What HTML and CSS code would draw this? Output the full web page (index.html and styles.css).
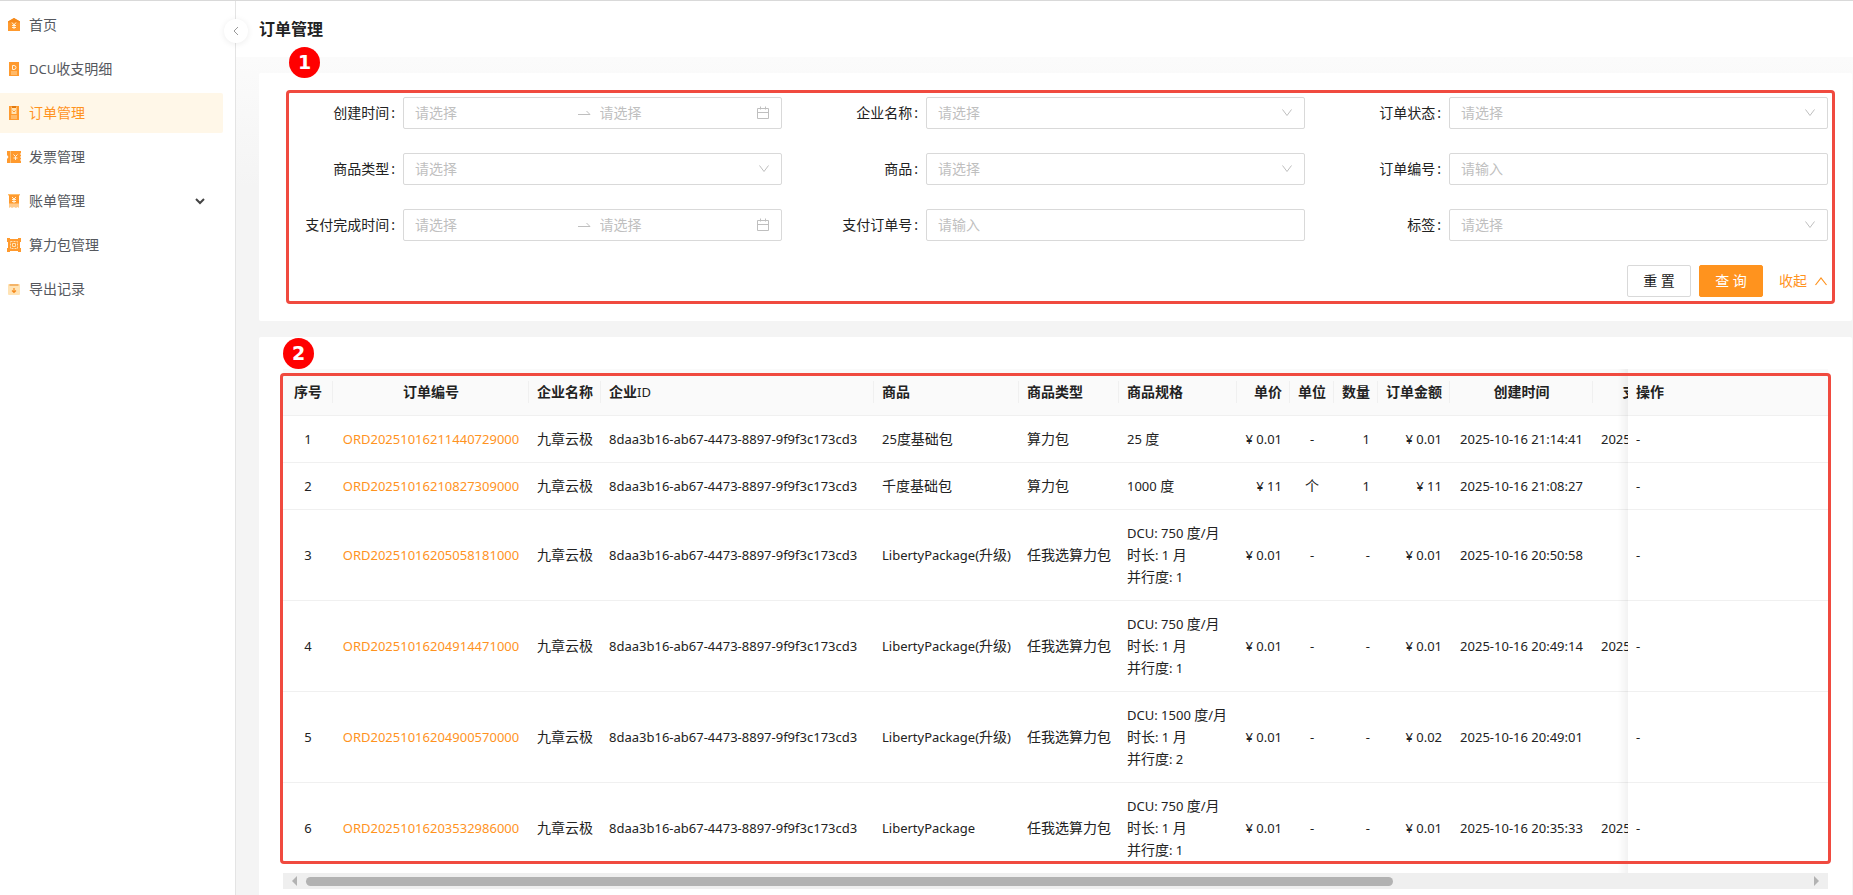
FILE: index.html
```html
<!DOCTYPE html>
<html lang="zh-CN">
<head>
  <meta charset="UTF-8">
  <meta name="viewport" content="width=device-width, initial-scale=1.0">
  <title>订单管理</title>
  <link rel="stylesheet" href="styles.css">
</head>
<body>
  <svg class="defs" aria-hidden="true">
    <symbol id="down" viewBox="0 0 12 12"><path d="M1.5 2.5 6 8.5l4.5-6" fill="none" stroke="currentColor"/></symbol>
    <symbol id="arrow" viewBox="0 0 16 16"><path d="M2 9.500h12L10.500 6" fill="none" stroke="currentColor"/></symbol>
    <symbol id="calendar" viewBox="0 0 14 14"><path d="M1.500 2.500h11v10h-11zM1.500 6.500h11M4.500 .5v3M9.500 .5v3" fill="none" stroke="currentColor"/></symbol>
  </svg>

  <aside class="sidebar">
    <nav class="menu">
      <a href="#">
        <svg viewBox="0 0 14 14"><path d="M7 0 13 3.500V13H1V3.500z" fill="#ff9a2e"/><path d="M1 3.500 7 0l6 3.500V4.500H1z" fill="#f58a1c"/><path d="M5 4.500l2 2.500L9 4.500M7 7v4M5 7.500h4M5 9.500h4" fill="none" stroke="#fff2dc"/></svg>
        <span>首页</span>
      </a>
      <a href="#">
        <svg viewBox="0 0 14 14"><path d="M2 0h10v14H2z" fill="#ff9a2e"/><path d="M5.500 3.500H7q2 0 2 2t-2 2H5.500z" fill="none" stroke="#fff2dc"/><path d="M4 10h6M4 12h6" stroke="#ffd9a3"/></svg>
        <span><span class="en">DCU</span>收支明细</span>
      </a>
      <a href="#" class="active">
        <svg viewBox="0 0 14 14"><path d="M2 0h10v14H2z" fill="#ff9a2e"/><path d="M4.500 1h5v7h-5z" fill="#ffe3b5"/><path d="M5 0h4v2H5z" fill="#e07a10"/><path d="M5.500 4.500 7 6l1.500-1.500" fill="none" stroke="#ff9a2e"/><path d="M4 10h6M4 12h6" stroke="#ffd9a3"/></svg>
        <span>订单管理</span>
      </a>
      <a href="#">
        <svg viewBox="0 0 14 14"><path d="M0 1h14v2l-1 1 1 1v1l-1 1 1 1v1l-1 1 1 1v2H0v-4l1.500-2L0 5z" fill="#ff9a2e"/><path d="M3.500 1v12" stroke="#f9c27a"/><path d="M6.500 4.500l2 2 2-2M8.500 6.500V10M6.500 8h4" fill="none" stroke="#fff2dc"/></svg>
        <span>发票管理</span>
      </a>
      <a href="#">
        <svg viewBox="0 0 14 14"><path d="M1 0h12v1.500H1z" fill="#ffbe6b"/><path d="M2 1h10v9H2z" fill="#ff9a2e"/><path d="M2 9.500h10V14l-1.500-1L9 14l-2-1-2 1-1.500-1L2 14z" fill="#ffc98a"/><path d="M5 3l2 2 2-2M7 5v4M5 5.500h4M5 7.500h4" fill="none" stroke="#fff2dc"/></svg>
        <span>账单管理</span>
        <svg class="caret" viewBox="0 0 12 12"><path d="M2 4l4 4 4-4" fill="none" stroke="currentColor" stroke-width="2"/></svg>
      </a>
      <a href="#">
        <svg viewBox="0 0 14 14"><path d="M0 0h3v1h8V0h3v4h-1v6h1v4h-3v-1H3v1H0v-4h1V4H0z" fill="#ff9a2e"/><path d="M3.500 3.500h7v7h-7z" fill="none" stroke="#ffe0b0" stroke-dasharray="2 1"/><path d="M5.500 5.500h3v3h-3z" fill="none" stroke="#ffe0b0"/></svg>
        <span>算力包管理</span>
      </a>
      <a href="#">
        <svg viewBox="0 0 14 14"><rect x="1" y="2" width="12" height="11" rx="1" fill="#ffe3b5"/><path d="M2.500 3h9" stroke="#e8851c"/><path d="M7 6v4.500M5 8.500l2 2 2-2" fill="none" stroke="#f58a1c" stroke-width="1.200"/></svg>
        <span>导出记录</span>
      </a>
    </nav>
    <button class="collapse" type="button" aria-label="收起菜单">
      <svg viewBox="0 0 12 12"><path d="M8 2 4 6l4 4" fill="none" stroke="currentColor"/></svg>
    </button>
  </aside>

  <main class="main">
    <header class="header">
      <h1>订单管理</h1>
    </header>

    <div class="content">
      <section class="card">
        <form class="filters">
          <div class="field">
            <label for="created">创建时间<i>:</i></label>
            <div class="control range">
              <input id="created" type="text" placeholder="请选择">
              <svg class="sep"><use href="#arrow"/></svg>
              <input type="text" placeholder="请选择" aria-label="创建时间止">
              <svg class="cal"><use href="#calendar"/></svg>
            </div>
          </div>
          <div class="field">
            <label for="company">企业名称<i>:</i></label>
            <div class="control"><select id="company"><option>请选择</option></select><svg class="down"><use href="#down"/></svg></div>
          </div>
          <div class="field">
            <label for="status">订单状态<i>:</i></label>
            <div class="control"><select id="status"><option>请选择</option></select><svg class="down"><use href="#down"/></svg></div>
          </div>
          <div class="field">
            <label for="type">商品类型<i>:</i></label>
            <div class="control"><select id="type"><option>请选择</option></select><svg class="down"><use href="#down"/></svg></div>
          </div>
          <div class="field">
            <label for="goods">商品<i>:</i></label>
            <div class="control"><select id="goods"><option>请选择</option></select><svg class="down"><use href="#down"/></svg></div>
          </div>
          <div class="field">
            <label for="order">订单编号<i>:</i></label>
            <div class="control"><input id="order" type="text" placeholder="请输入"></div>
          </div>
          <div class="field">
            <label for="paid">支付完成时间<i>:</i></label>
            <div class="control range">
              <input id="paid" type="text" placeholder="请选择">
              <svg class="sep"><use href="#arrow"/></svg>
              <input type="text" placeholder="请选择" aria-label="支付完成时间止">
              <svg class="cal"><use href="#calendar"/></svg>
            </div>
          </div>
          <div class="field">
            <label for="payno">支付订单号<i>:</i></label>
            <div class="control"><input id="payno" type="text" placeholder="请输入"></div>
          </div>
          <div class="field">
            <label for="tag">标签<i>:</i></label>
            <div class="control"><select id="tag"><option>请选择</option></select><svg class="down"><use href="#down"/></svg></div>
          </div>
          <div class="actions">
            <button class="btn" type="reset">重 置</button>
            <button class="btn primary" type="button">查 询</button>
            <a class="fold" href="#">收起 <svg viewBox="0 0 14 14"><path d="M1.500 11 7 4l5.500 7" fill="none" stroke="currentColor" stroke-width="1.200"/></svg></a>
          </div>
        </form>
        <div class="frame frame-filters"></div>
        <span class="badge badge-one">1</span>
      </section>

      <section class="card card-table">
        <div class="table-box">
          <div class="scroller">
            <table>
              <colgroup>
                <col class="w-index"><col class="w-order"><col class="w-company"><col class="w-id"><col class="w-goods"><col class="w-type"><col class="w-spec"><col class="w-price"><col class="w-unit"><col class="w-unit"><col class="w-company"><col class="w-time"><col class="w-time"><col class="w-op">
              </colgroup>
              <thead>
                <tr>
                  <th class="center">序号</th>
                  <th class="center">订单编号</th>
                  <th>企业名称</th>
                  <th>企业<span class="en">ID</span></th>
                  <th>商品</th>
                  <th>商品类型</th>
                  <th>商品规格</th>
                  <th class="right">单价</th>
                  <th class="center">单位</th>
                  <th class="right">数量</th>
                  <th class="right">订单金额</th>
                  <th class="center">创建时间</th>
                  <th class="center">支付完成时间</th>
                  <th class="fixed">操作</th>
                </tr>
              </thead>
              <tbody>
                <tr>
                  <td class="num center">1</td>
                  <td class="num center"><a href="#">ORD20251016211440729000</a></td>
                  <td>九章云极</td>
                  <td class="num">8daa3b16-ab67-4473-8897-9f9f3c173cd3</td>
                  <td><span class="en">25</span>度基础包</td>
                  <td>算力包</td>
                  <td><span class="en">25 </span>度</td>
                  <td class="num right">¥ 0.01</td>
                  <td class="num center">-</td>
                  <td class="num right">1</td>
                  <td class="num right">¥ 0.01</td>
                  <td class="num center">2025-10-16 21:14:41</td>
                  <td class="num">2025-10-16 21:14:41</td>
                  <td class="num fixed">-</td>
                </tr>
                <tr>
                  <td class="num center">2</td>
                  <td class="num center"><a href="#">ORD20251016210827309000</a></td>
                  <td>九章云极</td>
                  <td class="num">8daa3b16-ab67-4473-8897-9f9f3c173cd3</td>
                  <td>千度基础包</td>
                  <td>算力包</td>
                  <td><span class="en">1000 </span>度</td>
                  <td class="num right">¥ 11</td>
                  <td class="center">个</td>
                  <td class="num right">1</td>
                  <td class="num right">¥ 11</td>
                  <td class="num center">2025-10-16 21:08:27</td>
                  <td></td>
                  <td class="num fixed">-</td>
                </tr>
                <tr>
                  <td class="num center">3</td>
                  <td class="num center"><a href="#">ORD20251016205058181000</a></td>
                  <td>九章云极</td>
                  <td class="num">8daa3b16-ab67-4473-8897-9f9f3c173cd3</td>
                  <td><span class="en">LibertyPackage(</span>升级<span class="en">)</span></td>
                  <td>任我选算力包</td>
                  <td><span class="en">DCU: 750 </span>度<span class="en">/</span>月<br>时长<span class="en">: 1 </span>月<br>并行度<span class="en">: 1</span></td>
                  <td class="num right">¥ 0.01</td>
                  <td class="num center">-</td>
                  <td class="num right">-</td>
                  <td class="num right">¥ 0.01</td>
                  <td class="num center">2025-10-16 20:50:58</td>
                  <td></td>
                  <td class="num fixed">-</td>
                </tr>
                <tr>
                  <td class="num center">4</td>
                  <td class="num center"><a href="#">ORD20251016204914471000</a></td>
                  <td>九章云极</td>
                  <td class="num">8daa3b16-ab67-4473-8897-9f9f3c173cd3</td>
                  <td><span class="en">LibertyPackage(</span>升级<span class="en">)</span></td>
                  <td>任我选算力包</td>
                  <td><span class="en">DCU: 750 </span>度<span class="en">/</span>月<br>时长<span class="en">: 1 </span>月<br>并行度<span class="en">: 1</span></td>
                  <td class="num right">¥ 0.01</td>
                  <td class="num center">-</td>
                  <td class="num right">-</td>
                  <td class="num right">¥ 0.01</td>
                  <td class="num center">2025-10-16 20:49:14</td>
                  <td class="num">2025-10-16 20:49:14</td>
                  <td class="num fixed">-</td>
                </tr>
                <tr>
                  <td class="num center">5</td>
                  <td class="num center"><a href="#">ORD20251016204900570000</a></td>
                  <td>九章云极</td>
                  <td class="num">8daa3b16-ab67-4473-8897-9f9f3c173cd3</td>
                  <td><span class="en">LibertyPackage(</span>升级<span class="en">)</span></td>
                  <td>任我选算力包</td>
                  <td><span class="en">DCU: 1500 </span>度<span class="en">/</span>月<br>时长<span class="en">: 1 </span>月<br>并行度<span class="en">: 2</span></td>
                  <td class="num right">¥ 0.01</td>
                  <td class="num center">-</td>
                  <td class="num right">-</td>
                  <td class="num right">¥ 0.02</td>
                  <td class="num center">2025-10-16 20:49:01</td>
                  <td></td>
                  <td class="num fixed">-</td>
                </tr>
                <tr>
                  <td class="num center">6</td>
                  <td class="num center"><a href="#">ORD20251016203532986000</a></td>
                  <td>九章云极</td>
                  <td class="num">8daa3b16-ab67-4473-8897-9f9f3c173cd3</td>
                  <td class="num">LibertyPackage</td>
                  <td>任我选算力包</td>
                  <td><span class="en">DCU: 750 </span>度<span class="en">/</span>月<br>时长<span class="en">: 1 </span>月<br>并行度<span class="en">: 1</span></td>
                  <td class="num right">¥ 0.01</td>
                  <td class="num center">-</td>
                  <td class="num right">-</td>
                  <td class="num right">¥ 0.01</td>
                  <td class="num center">2025-10-16 20:35:33</td>
                  <td class="num">2025-10-16 20:35:33</td>
                  <td class="num fixed">-</td>
                </tr>
              </tbody>
            </table>
          </div>
          <div class="frame frame-table"></div>
          <span class="badge badge-two">2</span>
        </div>
        <div class="scrollbar">
          <svg viewBox="0 0 5 10"><path d="M5 0v10L0 5z"/></svg>
          <div class="track"><div class="thumb"></div></div>
          <svg viewBox="0 0 5 10"><path d="M0 0v10l5-5z"/></svg>
        </div>
      </section>
    </div>
  </main>
</body>
</html>
```

FILE: styles.css
```css
* {
  box-sizing: border-box;
}
body {
  margin: 0;
  height: 100vh;
  overflow: hidden;
  display: flex;
  border-top: 1px solid #d9d9d9;
  background: #fff;
  color: #222;
  font-family: "Noto Sans", "Noto Sans CJK SC", sans-serif;
  font-size: 14px;
  line-height: 22px;
}
a {
  color: #ff931e;
  text-decoration: none;
}
input, select, button {
  font: inherit;
  color: inherit;
}
.defs {
  position: absolute;
  width: 0;
  height: 0;
}
.en, .num {
  font-size: 13px;
}
.en {
  font-weight: normal;
  line-height: 1;
  white-space: pre;
}

/* sidebar */
.sidebar {
  position: relative;
  flex: none;
  width: 236px;
  border-right: 1px solid #e4e4e4;
}
.menu {
  display: flex;
  flex-direction: column;
  gap: 4px;
  margin-right: 12px;
  padding-top: 4px;
}
.menu a {
  display: flex;
  align-items: center;
  gap: 8px;
  height: 40px;
  padding: 0 17px 0 7px;
  border-radius: 0 2px 2px 0;
  color: #55585e;
}
.menu a.active {
  background: #fff7e8;
  color: #ff931e;
}
.menu svg {
  width: 14px;
  height: 14px;
}
.menu .caret {
  width: 12px;
  height: 12px;
  margin-left: auto;
  color: #444;
}
.collapse {
  position: absolute;
  top: 18px;
  right: -13px;
  z-index: 1;
  width: 24px;
  height: 24px;
  padding: 6px;
  border: none;
  border-radius: 50%;
  background: #fff;
  box-shadow: 0 1px 6px rgba(0, 0, 0, 0.08);
  color: #999;
}
.collapse svg {
  display: block;
  width: 12px;
  height: 12px;
}

/* page */
.main {
  flex: 1;
  min-width: 0;
  display: flex;
  flex-direction: column;
}
.header {
  padding: 17px 23px;
}
.header h1 {
  margin: 0;
  font-size: 16px;
  line-height: 22px;
}
.content {
  flex: 1;
  display: flex;
  flex-direction: column;
  gap: 16px;
  padding: 16px 1px 0 23px;
  background: linear-gradient(#fbfbfb, #f4f4f4 130px);
}
.card {
  position: relative;
  padding: 24px;
  border-radius: 2px;
  background: #fff;
}

/* filters */
.filters {
  display: grid;
  grid-template-columns: repeat(3, minmax(0, 1fr));
  gap: 24px;
}
.field {
  display: flex;
  align-items: center;
}
.field label {
  flex: none;
  width: 120px;
  text-align: right;
}
.field i {
  margin: 0 8px 0 2px;
  font-style: normal;
}
.control {
  position: relative;
  flex: 1;
  min-width: 0;
  display: flex;
  align-items: center;
  height: 32px;
  padding: 0 11px;
  border: 1px solid #d9d9d9;
  border-radius: 2px;
}
.control input, .control select {
  flex: 1;
  min-width: 0;
  padding: 0;
  border: none;
  outline: none;
  background: none;
  appearance: none;
}
.control select, .control input::placeholder {
  color: #bfbfbf;
}
.control svg {
  flex: none;
  color: #bfbfbf;
}
.down {
  width: 12px;
  height: 12px;
}
.sep {
  width: 16px;
  height: 16px;
  margin: 0 8px;
}
.cal {
  width: 14px;
  height: 14px;
  margin-left: 4px;
}
.actions {
  grid-column: 1 / -1;
  display: flex;
  justify-content: flex-end;
  gap: 8px;
}
.btn {
  width: 64px;
  height: 32px;
  padding: 0;
  border: 1px solid #d9d9d9;
  border-radius: 2px;
  background: #fff;
}
.btn.primary {
  border-color: #ff931e;
  background: #ff931e;
  color: #fff;
}
.fold {
  display: flex;
  align-items: center;
  gap: 7px;
  padding-left: 8px;
}
.fold svg {
  width: 14px;
  height: 14px;
}

/* numbered marks */
.frame {
  position: absolute;
  border: 3px solid #f04a3f;
  border-radius: 4px;
  pointer-events: none;
  z-index: 3;
}
.frame-filters {
  inset: 17px 17px 17px 27px;
}
.frame-table {
  inset: 4px -3px 9px -3px;
}
.badge {
  position: absolute;
  width: 31px;
  height: 31px;
  border-radius: 50%;
  background: #f00;
  color: #fff;
  font: bold 19px/31px "DejaVu Sans", sans-serif;
  text-align: center;
  z-index: 3;
}
.badge-one {
  top: -26px;
  left: 30px;
}
.badge-two {
  top: -31px;
  left: 0;
}

/* table */
.card-table {
  flex: 1;
  padding-top: 32px;
}
.table-box {
  position: relative;
}
.scroller {
  overflow-x: auto;
  scrollbar-width: none;
}
table {
  width: 1653px;
  table-layout: fixed;
  border-collapse: separate;
  border-spacing: 0;
}
.w-index { width: 50px; }
.w-order { width: 196px; }
.w-company { width: 72px; }
.w-id { width: 273px; }
.w-goods { width: 145px; }
.w-type { width: 100px; }
.w-spec { width: 118px; }
.w-price { width: 53px; }
.w-unit { width: 44px; }
.w-time { width: 143px; }
.w-op { width: 200px; }
th, td {
  position: relative;
  padding: 12px 8px;
  border-bottom: 1px solid #f0f0f0;
  background: #fff;
  text-align: left;
  white-space: nowrap;
}
th {
  background: #fafafa;
  font-weight: bold;
}
th:not(.fixed)::before {
  content: "";
  position: absolute;
  top: 12px;
  right: 0;
  width: 1px;
  height: 22px;
  background: #f0f0f0;
}
tbody tr:last-child td {
  border-bottom: none;
}
.center {
  text-align: center;
}
.right {
  text-align: right;
}
.fixed {
  position: sticky;
  right: 0;
}
.fixed::after {
  content: "";
  position: absolute;
  top: 0;
  bottom: -1px;
  left: -10px;
  width: 10px;
  background: linear-gradient(to right, rgba(0, 0, 0, 0), rgba(0, 0, 0, 0.05));
}
.scrollbar {
  display: flex;
  align-items: center;
  gap: 9px;
  height: 16px;
  padding: 0 9px;
  background: #efefef;
}
.scrollbar svg {
  width: 5px;
  height: 10px;
  fill: #b2b2b2;
}
.track {
  flex: 1;
}
.thumb {
  width: 72.5%;
  height: 9px;
  border-radius: 5px;
  background: #b2b2b2;
}
```
